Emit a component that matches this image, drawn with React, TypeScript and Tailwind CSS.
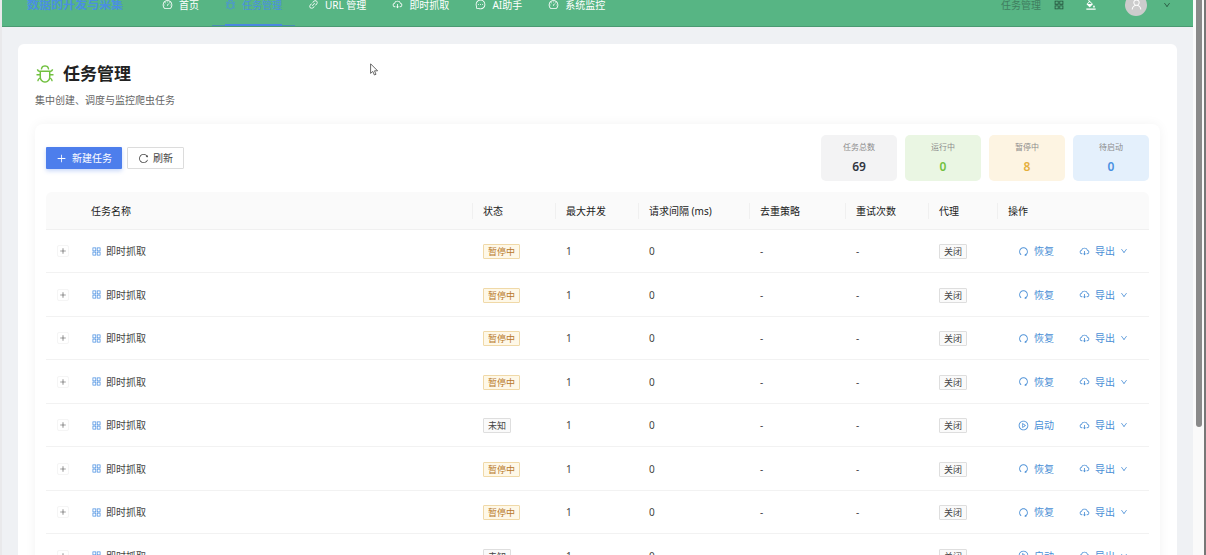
import React from "react";
import {
  AiOutlineAppstore,
  AiOutlineBgColors,
  AiOutlineBug,
  AiOutlineCloudDownload,
  AiOutlineDashboard,
  AiOutlineDown,
  AiOutlineLink,
  AiOutlineMessage,
  AiOutlinePlayCircle,
  AiOutlinePlus,
  AiOutlineRedo,
  AiOutlineReload,
  AiOutlineUser,
} from "react-icons/ai";

interface Task {
  id: number;
  name: string;
  status: "paused" | "unknown";
}

const navItems = [
  { label: "首页", icon: AiOutlineDashboard },
  { label: "任务管理", icon: AiOutlineBug, active: true },
  { label: "URL 管理", icon: AiOutlineLink },
  { label: "即时抓取", icon: AiOutlineCloudDownload },
  { label: "AI助手", icon: AiOutlineMessage },
  { label: "系统监控", icon: AiOutlineDashboard },
];

const stats = [
  { label: "任务总数", value: 69, box: "bg-[#f3f3f4]", text: "text-[#303540]" },
  { label: "运行中", value: 0, box: "bg-[#eaf6e3]", text: "text-[#72c140]" },
  { label: "暂停中", value: 8, box: "bg-[#fdf4e2]", text: "text-[#e5af3c]" },
  { label: "待启动", value: 0, box: "bg-[#e4f0fc]", text: "text-[#4a90e2]" },
];

const columns = [
  { title: "", width: "w-[34px]" },
  { title: "任务名称", width: "" },
  { title: "状态", width: "w-[83px]" },
  { title: "最大并发", width: "w-[83px]" },
  { title: "请求间隔 (ms)", width: "w-[111px]" },
  { title: "去重策略", width: "w-[96px]" },
  { title: "重试次数", width: "w-[83px]" },
  { title: "代理", width: "w-[69px]" },
  { title: "操作", width: "w-[152px]" },
];

const statuses: Task["status"][] = [
  "paused",
  "paused",
  "paused",
  "paused",
  "unknown",
  "paused",
  "paused",
  "unknown",
];

const tasks: Task[] = statuses.map((status, index) => ({
  id: index + 1,
  name: "即时抓取",
  status,
}));

const Header: React.FC = () => (
  <header className="-mt-[17px] flex h-11 shrink-0 items-center border-b border-[#4a9a72] bg-[#57b584] pl-[25px] pr-[22px]">
    <div className="w-[122px] text-[12px] font-bold text-[#4a8fe0]">
      数据的开发与采集
    </div>
    <nav className="flex h-full flex-1">
      {navItems.map((item) => (
        <a
          key={item.label}
          href="#"
          className={`relative flex h-full items-center gap-[6px] px-[13px] ${
            item.active ? "text-[#4a8fe0]" : "text-white"
          }`}
        >
          <item.icon className="size-[11px]" />
          {item.label}
          {item.active && (
            <>
              <span className="absolute inset-x-0 bottom-0 h-px bg-[#4a8fb4]" />
              <span className="absolute inset-x-[13px] bottom-0 h-[2px] bg-[#4a86e0]" />
            </>
          )}
        </a>
      ))}
    </nav>
    <div className="flex items-center">
      <span className="text-[#3f7d5f]">任务管理</span>
      <button aria-label="应用" className="ml-3 text-[#24513b]">
        <AiOutlineAppstore className="size-3" />
      </button>
      <button aria-label="主题" className="ml-5 text-white">
        <AiOutlineBgColors className="size-3" />
      </button>
      <span className="ml-7 flex size-[22px] items-center justify-center rounded-full bg-[#cccccc] text-white">
        <AiOutlineUser className="size-[13px]" />
      </span>
      <button aria-label="账户" className="ml-4 text-[#24513b]">
        <AiOutlineDown className="size-2" />
      </button>
    </div>
  </header>
);

const Toolbar: React.FC = () => (
  <div className="flex items-center justify-between">
    <div className="flex gap-[5px]">
      <button className="flex h-[22px] items-center gap-[5px] rounded-[1px] bg-[#4d7eec] px-[10px] text-white shadow-[0_2px_4px_rgba(77,126,236,0.3)]">
        <AiOutlinePlus className="size-[11px]" />
        新建任务
      </button>
      <button className="flex h-[22px] items-center gap-1 rounded-[1px] border border-[#dcdcdc] bg-white px-[10px]">
        <AiOutlineReload className="size-[11px]" />
        刷新
      </button>
    </div>
    <div className="flex gap-2">
      {stats.map((stat) => (
        <div
          key={stat.label}
          className={`flex h-[46px] w-[76px] flex-col items-center justify-center gap-[6px] rounded-[5px] ${stat.box}`}
        >
          <span className="text-[8px] leading-3 text-[#8c8c8c]">
            {stat.label}
          </span>
          <span className={`text-[12px] leading-4 font-semibold ${stat.text}`}>
            {stat.value}
          </span>
        </div>
      ))}
    </div>
  </div>
);

const TaskRow: React.FC<{ task: Task }> = ({ task }) => {
  const paused = task.status === "paused";
  const ActionIcon = paused ? AiOutlineRedo : AiOutlinePlayCircle;

  return (
    <tr className="h-[43px] even:h-[44px] [&>td]:border-b [&>td]:border-[#f2f2f2] [&>td]:px-[11px]">
      <td>
        <button
          aria-label="展开"
          className="flex size-3 items-center justify-center rounded-xs border border-[#f5f5f5]"
        >
          <AiOutlinePlus className="size-2" />
        </button>
      </td>
      <td>
        <div className="flex items-center gap-1">
          <AiOutlineAppstore className="size-[11px] text-[#4a90e2]" />
          {task.name}
        </div>
      </td>
      <td>
        <span
          className={`inline-block rounded-[1px] border px-1 text-[9px] leading-[13px] ${
            paused
              ? "border-[#f0d9a8] bg-[#fef8e8] text-[#b8792b]"
              : "border-[#dedede] bg-[#fafafa]"
          }`}
        >
          {paused ? "暂停中" : "未知"}
        </span>
      </td>
      <td>1</td>
      <td>0</td>
      <td>-</td>
      <td>-</td>
      <td>
        <span className="inline-block rounded-[1px] border border-[#dedede] bg-[#fafafa] px-1 text-[9px] leading-[13px]">
          关闭
        </span>
      </td>
      <td>
        <div className="flex items-center gap-[25px] pl-[10px] text-[#4a8fd6]">
          <button className="flex items-center gap-[5px]">
            <ActionIcon className="size-[11px]" />
            {paused ? "恢复" : "启动"}
          </button>
          <button className="flex items-center gap-[5px]">
            <AiOutlineCloudDownload className="size-[11px]" />
            导出
            <AiOutlineDown className="size-2" />
          </button>
        </div>
      </td>
    </tr>
  );
};

const App: React.FC = () => {
  return (
    <div className="flex h-screen overflow-hidden border-l-2 border-[#e9e9eb] bg-[#eff1f4] font-['Noto_Sans','Noto_Sans_CJK_SC',sans-serif] text-[10px] leading-4 text-[#444444]">
      <div className="flex min-w-0 flex-1 flex-col">
        <Header />
        <main className="mx-4 mt-[17px] shrink-0 rounded-t-md bg-white px-[17px] pt-5">
          <h1 className="flex items-center gap-2 text-[17px] leading-5 font-bold text-[#222222]">
            <AiOutlineBug className="size-5 text-[#72c140]" />
            任务管理
          </h1>
          <p className="mt-2 text-[#666666]">集中创建、调度与监控爬虫任务</p>
          <section className="mt-4 rounded-t-lg px-[11px] pt-[11px] shadow-[0_0_12px_rgba(0,0,0,0.05)]">
            <Toolbar />
            <table className="mt-[11px] w-full table-fixed border-separate border-spacing-0 text-left">
              <thead>
                <tr className="h-[38px]">
                  {columns.map((column, index) => (
                    <th
                      key={index}
                      className={`border-b border-[#f0f0f0] bg-[#fafafa] p-0 font-normal text-[#222222] first:rounded-tl-md last:rounded-tr-md ${column.width}`}
                    >
                      <div
                        className={`h-4 ${
                          index > 1
                            ? "border-l border-[#f0f0f0] px-[10px]"
                            : "px-[11px]"
                        }`}
                      >
                        {column.title}
                      </div>
                    </th>
                  ))}
                </tr>
              </thead>
              <tbody>
                {tasks.map((task) => (
                  <TaskRow key={task.id} task={task} />
                ))}
              </tbody>
            </table>
          </section>
        </main>
      </div>
      <div className="flex w-[13px] shrink-0 justify-center border-r-2 border-[#777777] bg-[#fafafa]">
        <div className="h-[77%] w-[6px] rounded-b-full bg-[#8a8a8a]" />
      </div>
      {/* mouse pointer */}
      <svg
        className="absolute top-[63px] left-[370px] h-[13px] w-[9px]"
        viewBox="0 0 9 13"
        fill="white"
        stroke="#444444"
        strokeWidth="0.8"
      >
        <path d="M0.6 0.8v9.6l2.2-2 1.6 3.6 1.6-.7-1.5-3.5h3.1z" />
      </svg>
    </div>
  );
};

export default App;
